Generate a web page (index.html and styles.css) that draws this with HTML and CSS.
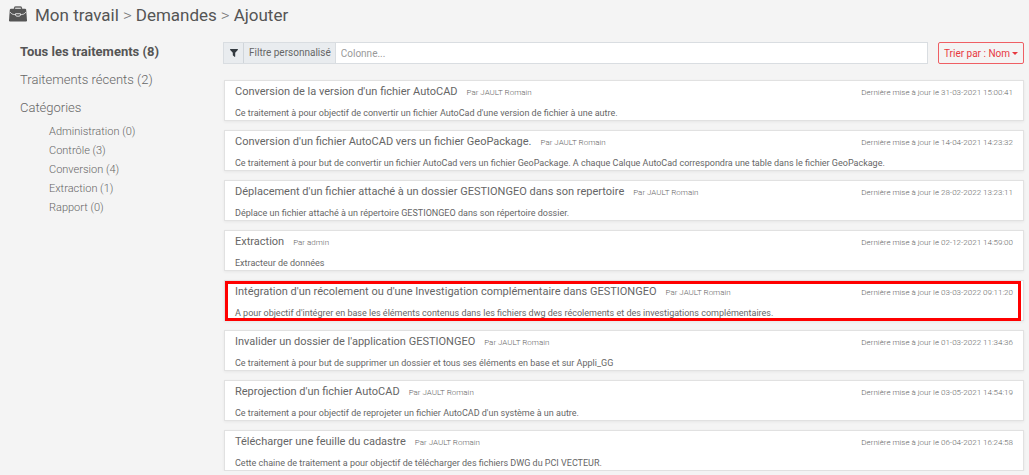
FILE: index.html
```html
<!DOCTYPE html>
<html lang="fr">
<head>
<meta charset="utf-8">
<title>Mon travail - Demandes - Ajouter</title>
<link rel="stylesheet" href="styles.css">
</head>
<body>
<header class="breadcrumb">
  <svg class="briefcase" viewBox="0 0 18 16" aria-hidden="true">
    <path d="M5.500 3V2Q5.500 1 6.500 1h5q1 0 1 1V3" fill="none" stroke="#666" stroke-width="1.300"/>
    <path d="M2 2.800h14q1 0 1.200 1L18 14.300Q18 15.500 17 15.500H1Q0 15.500 0 14.300L.8 3.800Q1 2.800 2 2.800z" fill="#555"/>
    <path d="M1 6Q2 8.600 6.500 8.800M11.500 8.800Q16 8.600 17 6" fill="none" stroke="#ccc" stroke-width="1"/>
    <path d="M6.500 7.700h5v1.300q-.3 1.200-1.500 1.200H8q-1.200 0-1.500-1.200z" fill="#555" stroke="#ddd" stroke-width="1"/>
  </svg>
  <nav class="crumbs"><span>Mon travail</span><span class="sep">&gt;</span><span>Demandes</span><span class="sep">&gt;</span><span>Ajouter</span></nav>
</header>
<div class="layout">
  <aside class="sidebar">
    <a class="group active" href="#">Tous les traitements (8)</a>
    <a class="group" href="#">Traitements récents (2)</a>
    <a class="group" href="#">Catégories</a>
    <ul class="categories">
      <li><a href="#">Administration (0)</a></li>
      <li><a href="#">Contrôle (3)</a></li>
      <li><a href="#">Conversion (4)</a></li>
      <li><a href="#">Extraction (1)</a></li>
      <li><a href="#">Rapport (0)</a></li>
    </ul>
  </aside>
  <main class="content">
    <div class="toolbar">
      <div class="filter">
        <button class="filter-btn" type="button" aria-label="Filtrer"><svg class="funnel" viewBox="0 0 8 8" aria-hidden="true"><path d="M.4 0h7.200q.6.300.2.900L5.200 3.700V7.500q-.2.600-.7.300L3 6.600Q2.800 6.400 2.800 6V3.700L.2.900Q-.2.300.4 0z" fill="#343a40"/></svg></button>
        <label class="filter-label" for="column">Filtre personnalisé</label>
        <input class="filter-input" id="column" type="text" placeholder="Colonne...">
      </div>
      <button class="sort" type="button">Trier par : Nom<span class="caret"></span></button>
    </div>
    <section class="list">
      <article class="card">
        <div class="head"><h2>Conversion de la version d'un fichier AutoCAD</h2><span class="author">Par JAULT Romain</span><time>Dernière mise à jour le 31-03-2021 15:00:41</time></div>
        <p>Ce traitement à pour objectif de convertir un fichier AutoCad d'une version de fichier à une autre.</p>
      </article>
      <article class="card">
        <div class="head"><h2>Conversion d'un fichier AutoCAD vers un fichier GeoPackage.</h2><span class="author">Par JAULT Romain</span><time>Dernière mise à jour le 14-04-2021 14:23:32</time></div>
        <p>Ce traitement à pour but de convertir un fichier AutoCad vers un fichier GeoPackage. A chaque Calque AutoCad correspondra une table dans le fichier GeoPackage.</p>
      </article>
      <article class="card">
        <div class="head"><h2>Déplacement d'un fichier attaché à un dossier GESTIONGEO dans son repertoire</h2><span class="author">Par JAULT Romain</span><time>Dernière mise à jour le 28-02-2022 13:23:11</time></div>
        <p>Déplace un fichier attaché à un répertoire GESTIONGEO dans son répertoire dossier.</p>
      </article>
      <article class="card">
        <div class="head"><h2>Extraction</h2><span class="author">Par admin</span><time>Dernière mise à jour le 02-12-2021 14:59:00</time></div>
        <p>Extracteur de données</p>
      </article>
      <article class="card marked">
        <div class="head"><h2>Intégration d'un récolement ou d'une Investigation complémentaire dans GESTIONGEO</h2><span class="author">Par JAULT Romain</span><time>Dernière mise à jour le 03-03-2022 09:11:20</time></div>
        <p>A pour objectif d'intégrer en base les éléments contenus dans les fichiers dwg des récolements et des investigations complémentaires.</p>
      </article>
      <article class="card">
        <div class="head"><h2>Invalider un dossier de l'application GESTIONGEO</h2><span class="author">Par JAULT Romain</span><time>Dernière mise à jour le 01-03-2022 11:34:36</time></div>
        <p>Ce traitement à pour but de supprimer un dossier et tous ses éléments en base et sur Appli_GG</p>
      </article>
      <article class="card">
        <div class="head"><h2>Reprojection d'un fichier AutoCAD</h2><span class="author">Par JAULT Romain</span><time>Dernière mise à jour le 03-05-2021 14:54:19</time></div>
        <p>Ce traitement a pour objectif de reprojeter un fichier AutoCAD d'un système à un autre.</p>
      </article>
      <article class="card">
        <div class="head"><h2>Télécharger une feuille du cadastre</h2><span class="author">Par JAULT Romain</span><time>Dernière mise à jour le 06-04-2021 16:24:58</time></div>
        <p>Cette chaine de traitement a pour objectif de télécharger des fichiers DWG du PCI VECTEUR.</p>
      </article>
    </section>
  </main>
</div>
</body>
</html>
```
FILE: styles.css
```css
* { box-sizing: border-box; }
body {
  margin: 0;
  background: #f4f4f4;
  color: #666;
  font-family: Roboto, "Liberation Sans", sans-serif;
  font-size: 11px;
}
a { color: inherit; text-decoration: none; }
.breadcrumb {
  display: flex;
  align-items: center;
  gap: 8px;
  height: 32px;
  padding: 0 9px 2px;
}
.briefcase { width: 18px; height: 16px; margin-bottom: 2px; }
.crumbs {
  display: flex;
  gap: 4px;
  font-size: 17px;
  line-height: 20px;
  color: #555;
}
.sep { color: #777; font-weight: 300; }
.layout { display: flex; }
.sidebar {
  flex: 0 0 223px;
  padding: 6px 0 0 20px;
  font-weight: 300;
}
.group {
  display: block;
  height: 28px;
  font-size: 13px;
  line-height: 28px;
}
.active { font-weight: 700; color: #555; }
.categories {
  margin: 0;
  padding: 0 0 0 29px;
  list-style: none;
  line-height: 19px;
}
.content {
  flex: 1;
  min-width: 0;
  padding: 10px 5px 0 0;
}
.toolbar { display: flex; gap: 10px; }
.filter {
  display: flex;
  flex: 1;
  height: 22px;
  border: 1px solid #d9dde1;
  background: #fff;
}
.filter-btn {
  display: flex;
  align-items: center;
  justify-content: center;
  width: 20px;
  padding: 0;
  border: 0;
  border-right: 1px solid #d0d5da;
  background: #e9ecef;
}
.funnel { width: 8px; height: 8px; }
.filter-label {
  padding: 0 4px 0 5px;
  border-right: 1px solid #d9dde1;
  background: #e9ecef;
  font-size: 10px;
  line-height: 20px;
}
.filter-input {
  flex: 1;
  min-width: 0;
  padding: 0 5px;
  border: 0;
  background: transparent;
  font: 10px Roboto, "Liberation Sans", sans-serif;
}
.filter-input::placeholder { color: #999; }
.sort {
  display: flex;
  align-items: center;
  gap: 2px;
  height: 22px;
  padding: 0 5px;
  border: 1px solid #ef5f64;
  border-radius: 2px;
  background: transparent;
  color: #e8393f;
  font: 10px Roboto, "Liberation Sans", sans-serif;
}
.caret {
  border: 3px solid transparent;
  border-top-color: #e8393f;
  border-bottom: 0;
}
.list {
  display: flex;
  flex-direction: column;
  gap: 9px;
  padding: 16px 0 0 1px;
}
.card {
  position: relative;
  padding: 3px 10px 0;
  border: 1px solid #e1e1e1;
  background: #fff;
  box-shadow: 0 1px 3px rgba(0, 0, 0, 0.06);
}
.marked::after {
  content: "";
  position: absolute;
  inset: 0 2px -1px 0;
  border: 3px solid #f00;
}
.head { display: flex; align-items: baseline; }
h2 {
  margin: 0;
  font-size: 11px;
  font-weight: 400;
  line-height: 16px;
}
.author { margin-left: 9px; font-size: 8px; font-weight: 300; }
time { margin-left: auto; font-size: 8px; font-weight: 300; }
p {
  margin: 6px 0 0;
  font-size: 9px;
  line-height: 14px;
}
```
